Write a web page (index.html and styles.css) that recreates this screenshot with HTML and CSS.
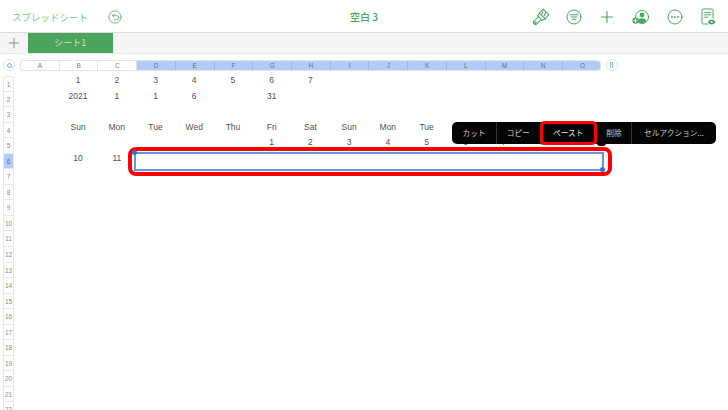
FILE: index.html
```html
<!DOCTYPE html>
<html lang="ja">
<head>
<meta charset="utf-8">
<title>空白 3</title>
<link rel="stylesheet" href="styles.css">
</head>
<body>
<div class="page">
  <header class="toolbar">
    <div class="tool-left">
      <span class="back-label">スプレッドシート</span>
      <svg class="ic undo" viewBox="0 0 16 16"><circle cx="8" cy="8" r="7"/><path d="M5.200 6.400h4.600a2.400 2.400 0 0 1 0 4.800H7.400M7 4.600 5.200 6.400 7 8.200"/></svg>
    </div>
    <div class="doc-title">空白 3</div>
    <div class="tool-right">
      <svg class="ic brush" viewBox="0 0 16 16"><path d="M10 1 15 5.800 11.800 9.600 6.600 4.600Z"/><path d="M6.600 4.600 5 7 9 11 11.800 9.600M5.600 7.800 1.400 12 1.400 14 3.600 14.800 8 10.400"/><path d="M9.800 2.800 8.800 5.400M12 4.200 10.800 7.200"/><circle cx="3" cy="13" r=".7"/></svg>
      <svg class="ic filter" viewBox="0 0 16 16"><circle cx="8" cy="8" r="7"/><path d="M4 5.800h8M5.200 8h5.600M6.400 10.200h3.200"/></svg>
      <svg class="ic plus" viewBox="0 0 16 16"><path d="M8 2.500v11M2.500 8h11"/></svg>
      <svg class="ic collab" viewBox="0 0 18 16"><circle cx="10" cy="8" r="6.500"/><circle class="fill" cx="10" cy="6" r="2.400"/><path class="fill" d="M5.600 12.200c.6-2.400 2.400-3 4.400-3s3.800.6 4.400 3c-1.200 1.200-2.800 2-4.400 2s-3.200-.8-4.400-2Z"/><circle class="fill" cx="3.600" cy="11.600" r="3.200"/><path class="cut" d="M3.600 10v3.200M2 11.600h3.200"/></svg>
      <svg class="ic more" viewBox="0 0 16 16"><circle cx="8" cy="8" r="7"/><circle class="fill" cx="5" cy="8" r=".9"/><circle class="fill" cx="8" cy="8" r=".9"/><circle class="fill" cx="11" cy="8" r=".9"/></svg>
      <svg class="ic doc" viewBox="0 0 16 18"><path d="M8 16H3.200A1.200 1.200 0 0 1 2 14.800V2.200A1.200 1.200 0 0 1 3.200 1h8.600A1.200 1.200 0 0 1 13 2.200V10"/><path d="M4.600 4.400h5.800M4.600 6.800h5.800M4.600 9.200h3.400"/><path class="fill" d="M7.800 14c1-1.700 2.200-2.500 3.800-2.500s2.800.8 3.900 2.500c-1.100 1.700-2.400 2.500-3.900 2.500s-2.800-.8-3.800-2.500Z"/><circle class="cut-fill" cx="11.600" cy="14" r="1"/></svg>
    </div>
  </header>

  <nav class="tabbar">
    <div class="add-sheet">
      <svg class="add-ic" viewBox="0 0 14 14"><path d="M7 1v12M1 7h12"/></svg>
    </div>
    <div class="tab">シート1</div>
  </nav>

  <div class="col-strip">
    <span class="corner"><i class="corner-dot"></i></span>
    <div class="cols">
      <span class="col">A</span><span class="col">B</span><span class="col">C</span>
      <span class="col on">D</span><span class="col on">E</span><span class="col on">F</span>
      <span class="col on">G</span><span class="col on">H</span><span class="col on">I</span>
      <span class="col on">J</span><span class="col on">K</span><span class="col on">L</span>
      <span class="col on">M</span><span class="col on">N</span><span class="col on">O</span>
    </div>
    <span class="corner end"><i class="pause"></i></span>
  </div>

  <main class="sheet">
    <div class="row first"><span class="rh">1</span><div class="cells"><span></span><span>1</span><span>2</span><span>3</span><span>4</span><span>5</span><span>6</span><span>7</span></div></div>
    <div class="row"><span class="rh">2</span><div class="cells"><span></span><span>2021</span><span>1</span><span>1</span><span>6</span><span></span><span>31</span></div></div>
    <div class="row"><span class="rh">3</span><div class="cells"></div></div>
    <div class="row"><span class="rh">4</span><div class="cells"><span></span><span>Sun</span><span>Mon</span><span>Tue</span><span>Wed</span><span>Thu</span><span>Fri</span><span>Sat</span><span>Sun</span><span>Mon</span><span>Tue</span></div></div>
    <div class="row"><span class="rh">5</span><div class="cells"><span></span><span></span><span></span><span></span><span></span><span></span><span>1</span><span>2</span><span>3</span><span>4</span><span>5</span><span>6</span><span>7</span><span>8</span><span>9</span></div></div>
    <div class="row"><span class="rh on">6</span><div class="cells"><span></span><span>10</span><span>11</span></div></div>
    <div class="row"><span class="rh">7</span></div>
    <div class="row"><span class="rh">8</span></div>
    <div class="row"><span class="rh">9</span></div>
    <div class="row"><span class="rh">10</span></div>
    <div class="row"><span class="rh">11</span></div>
    <div class="row"><span class="rh">12</span></div>
    <div class="row"><span class="rh">13</span></div>
    <div class="row"><span class="rh">14</span></div>
    <div class="row"><span class="rh">15</span></div>
    <div class="row"><span class="rh">16</span></div>
    <div class="row"><span class="rh">17</span></div>
    <div class="row"><span class="rh">18</span></div>
    <div class="row"><span class="rh">19</span></div>
    <div class="row"><span class="rh">20</span></div>
    <div class="row"><span class="rh">21</span></div>
    <div class="row"><span class="rh">22</span></div>
  </main>

  <div class="selection"><i class="handle tl"></i><i class="handle br"></i></div>
  <div class="callout-sel"></div>

  <div class="menu">
    <span class="item cut-item">カット</span>
    <span class="item copy-item">コピー</span>
    <span class="item paste-item">ペースト</span>
    <span class="item del-item">削除</span>
    <span class="item act-item">セルアクション...</span>
  </div>
  <div class="callout-paste"></div>
</div>
</body>
</html>
```

FILE: styles.css
```css
* { box-sizing: border-box; }
html, body { margin: 0; padding: 0; background: #fff; }
body { font-family: "Noto Sans CJK JP", "Liberation Sans", sans-serif; color: #4a4a4a; }
.page { position: relative; width: 728px; height: 410px; overflow: hidden; background: #fff; }

.toolbar { display: flex; align-items: center; height: 33px; padding: 1px 12px 0 12px; border-bottom: 1px solid #d9d9d9; position: relative; }
.tool-left { display: flex; align-items: center; gap: 18px; }
.back-label { font-size: 9.500px; color: #7fc08c; width: 78px; white-space: nowrap; }
.doc-title { position: absolute; left: 0; right: 0; top: 9px; text-align: center; font-size: 10px; line-height: 15px; font-weight: 500; color: #47a35b; }
.tool-right { margin-left: auto; display: flex; align-items: center; gap: 17px; }
.ic { width: 16px; height: 16px; fill: none; stroke: #4ca560; stroke-width: 1; stroke-linecap: round; stroke-linejoin: round; flex: none; }
.ic .fill { fill: #4ca560; stroke: none; }
.ic .cut { stroke: #fff; stroke-width: .9; }
.ic .cut-fill { fill: #fff; stroke: none; }
.undo { width: 14px; height: 14px; stroke: #62b074; }
.brush { width: 18px; height: 18px; stroke-width: .9; }
.filter { margin-left: -1px; }
.plus { stroke-width: 1.100; }
.collab { width: 18px; height: 16px; }
.doc { height: 18px; width: 16px; }

.tabbar { display: flex; height: 21px; background: #f5f5f5; border-bottom: 1px solid #e9e9e9; }
.add-sheet { width: 27.500px; display: flex; align-items: center; justify-content: center; }
.add-ic { width: 12px; height: 12px; fill: none; stroke: #808080; stroke-width: 1; }
.tab { width: 85.500px; height: 20px; background: #4ba45c; color: #cfe8d4; font-size: 9px; line-height: 20px; text-align: center; }

.col-strip { display: flex; align-items: center; height: 21px; padding: 1px 0 0 3px; }
.corner { width: 12px; height: 12px; border: 1px solid #e2e2e2; border-radius: 50%; display: flex; align-items: center; justify-content: center; flex: none; }
.corner-dot { width: 5px; height: 5px; border: 1px solid #6ea6ee; border-radius: 50%; }
.cols { display: grid; grid-template-columns: repeat(15, 38.730px); margin-left: 5px; height: 11px; border: 1px solid #e4e4e4; border-radius: 3px; overflow: hidden; width: 581px; }
.col { font-family: "Liberation Sans", sans-serif; font-size: 6.500px; line-height: 9px; text-align: center; color: #777; border-right: 1px solid #e4e4e4; }
.col.on { background: #b3cbf7; color: #5f6e8c; border-right-color: #9db8e6; }
.col:last-child { border-right: 0; }
.corner.end { margin-left: 4.500px; }
.pause { width: 3px; height: 6px; border-left: 1px solid #8ab6f2; border-right: 1px solid #8ab6f2; }

.sheet { margin-top: 1px; }
.row { display: flex; height: 15.550px; }
.rh { width: 11px; margin-left: 3px; flex: none; font-family: "Liberation Sans", sans-serif; font-size: 6.500px; line-height: 15px; text-align: center; color: #8a8a8a; border: 1px solid #e8e8e8; border-top: 0; }
.first .rh { border-top: 1px solid #e8e8e8; border-radius: 3px 3px 0 0; }
.rh.on { background: #b3cbf7; color: #5f6e8c; }
.cells { display: grid; grid-template-columns: repeat(15, 38.730px); margin-left: 6px; height: 100%; }
.cells span { font-family: "Liberation Sans", sans-serif; font-size: 8.500px; line-height: 9.500px; text-align: center; color: #505050; }

.selection { position: absolute; left: 134px; top: 151.500px; width: 470px; height: 19.500px; border: 2px solid #6796dc; }
.handle { position: absolute; z-index: 1; width: 5px; height: 5px; border-radius: 50%; background: #2f6fdc; }
.handle.tl { left: -3.800px; top: -4px; }
.handle.br { right: -3px; bottom: -3px; }
.callout-sel { position: absolute; left: 127.500px; top: 146.500px; width: 484px; height: 29.500px; border: 4px solid #f00; border-radius: 8px; }

.menu { position: absolute; left: 452px; top: 122px; width: 264px; height: 22px; background: #050505; border-radius: 5px; display: flex; }
.menu::after { content: ""; position: absolute; left: 145px; bottom: -2px; width: 9px; height: 3px; background: #050505; border-radius: 0 0 3px 3px; }
.item { display: block; font-size: 7.700px; line-height: 22px; text-align: center; color: #c9c9c9; border-right: 1px solid #333; white-space: nowrap; flex: none; }
.item:last-child { border-right: 0; }
.cut-item { width: 45px; }
.copy-item { width: 43.500px; }
.paste-item { width: 56.500px; color: #e4e4e4; }
.del-item { width: 35px; }
.act-item { width: 84px; }
.callout-paste { position: absolute; left: 539.500px; top: 120.500px; width: 57px; height: 24px; border: 3.500px solid #f00; border-radius: 5px; }
```
